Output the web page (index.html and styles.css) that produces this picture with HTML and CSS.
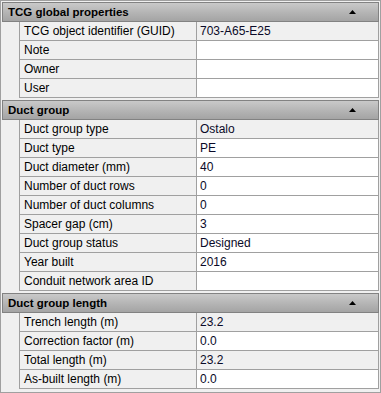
FILE: index.html
```html
<!DOCTYPE html>
<html lang="en">
<head>
  <meta charset="UTF-8" />
  <title>Properties</title>
  <link rel="stylesheet" href="styles.css">
</head>
<body>
  <div class="property-grid">
    <div class="section">
      <div class="section-header">
        <span>TCG global properties</span>
        <svg class="collapse" viewBox="0 0 7 4"><path d="M3.5 0L7 4H0Z" fill="#000"/></svg>
      </div>
      <div class="row"><div class="indent"></div><div class="label">TCG object identifier (GUID)</div><div class="value readonly">703-A65-E25</div></div>
      <div class="row"><div class="indent"></div><div class="label">Note</div><div class="value"></div></div>
      <div class="row"><div class="indent"></div><div class="label">Owner</div><div class="value"></div></div>
      <div class="row"><div class="indent"></div><div class="label">User</div><div class="value"></div></div>
    </div>

    <div class="section">
      <div class="section-header">
        <span>Duct group</span>
        <svg class="collapse" viewBox="0 0 7 4"><path d="M3.5 0L7 4H0Z" fill="#000"/></svg>
      </div>
      <div class="row"><div class="indent"></div><div class="label">Duct group type</div><div class="value readonly">Ostalo</div></div>
      <div class="row"><div class="indent"></div><div class="label">Duct type</div><div class="value">PE</div></div>
      <div class="row"><div class="indent"></div><div class="label">Duct diameter (mm)</div><div class="value">40</div></div>
      <div class="row"><div class="indent"></div><div class="label">Number of duct rows</div><div class="value">0</div></div>
      <div class="row"><div class="indent"></div><div class="label">Number of duct columns</div><div class="value">0</div></div>
      <div class="row"><div class="indent"></div><div class="label">Spacer gap (cm)</div><div class="value">3</div></div>
      <div class="row"><div class="indent"></div><div class="label">Duct group status</div><div class="value">Designed</div></div>
      <div class="row"><div class="indent"></div><div class="label">Year built</div><div class="value">2016</div></div>
      <div class="row"><div class="indent"></div><div class="label">Conduit network area ID</div><div class="value"></div></div>
    </div>

    <div class="section">
      <div class="section-header">
        <span>Duct group length</span>
        <svg class="collapse" viewBox="0 0 7 4"><path d="M3.5 0L7 4H0Z" fill="#000"/></svg>
      </div>
      <div class="row"><div class="indent"></div><div class="label">Trench length (m)</div><div class="value readonly">23.2</div></div>
      <div class="row"><div class="indent"></div><div class="label">Correction factor (m)</div><div class="value">0.0</div></div>
      <div class="row"><div class="indent"></div><div class="label">Total length (m)</div><div class="value readonly">23.2</div></div>
      <div class="row"><div class="indent"></div><div class="label">As-built length (m)</div><div class="value">0.0</div></div>
    </div>
  </div>
</body>
</html>
```

FILE: styles.css
```css
:root {
  --panel: #f0f0f0;
  --line: #a0a0a0;
  --header-border: #828282;
}

* {
  box-sizing: border-box;
  margin: 0;
  padding: 0;
}

body {
  font-family: 'Liberation Sans', Arial, sans-serif;
  font-size: 12px;
  color: #000;
  background: #ffffff;
}

.property-grid {
  width: 381px;
  height: 393px;
  border: 1px solid var(--line);
  padding: 1px;
  background: var(--panel);
  display: flex;
  flex-direction: column;
  gap: 2px;
  overflow: hidden;
}

.section-header {
  height: 20px;
  display: flex;
  align-items: center;
  justify-content: space-between;
  padding: 0 22px 0 5px;
  border: 1px solid var(--header-border);
  background: linear-gradient(to bottom, #c9c9c9 0%, #b2b2b2 60%, #a4a4a4 100%);
  font-weight: bold;
  font-size: 11.5px;
}

.collapse {
  width: 7px;
  height: 4px;
}

.row {
  display: grid;
  grid-template-columns: 17px 177px 1fr;
  height: 19px;
}

.label,
.value {
  border-left: 1px solid var(--line);
  border-bottom: 1px solid var(--line);
  padding: 0 4px;
  line-height: 18px;
  white-space: nowrap;
  overflow: hidden;
}

.label {
  background: var(--panel);
}

.value {
  background: #ffffff;
  border-right: 1px solid var(--line);
  padding-left: 3px;
  color: #0a0a28;
}

.value.readonly {
  background: var(--panel);
}
```
